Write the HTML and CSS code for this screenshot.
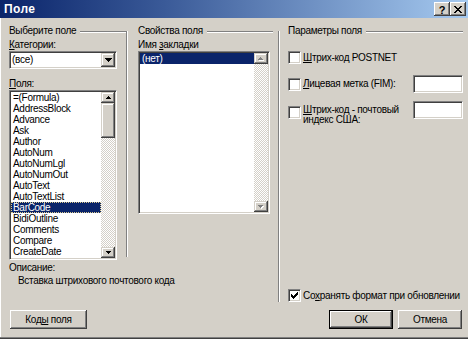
FILE: index.html
```html
<!DOCTYPE html>
<html lang="ru">
<head>
<meta charset="utf-8">
<title>Поле</title>
<link rel="stylesheet" href="styles.css">
</head>
<body>
<div class="window">
  <div class="titlebar">
    <span class="title">Поле</span>
    <div class="tb-buttons">
      <span class="tb-btn tb-help">?</span>
      <span class="tb-btn tb-close"><svg width="8" height="7" viewBox="0 0 8 7" shape-rendering="crispEdges"><path d="M0 0h2v1h-2z M6 0h2v1h-2z M1 1h2v1h-2z M5 1h2v1h-2z M2 2h4v1h-4z M3 3h2v1h-2z M2 4h4v1h-4z M1 5h2v1h-2z M5 5h2v1h-2z M0 6h2v1h-2z M6 6h2v1h-2z" fill="#000"/></svg></span>
    </div>
  </div>
  <div class="content">
    <div class="panes">
      <section class="pane pane-left">
        <div class="group"><span>Выберите поле</span><i class="etch"></i></div>
        <div class="label"><u>К</u>атегории:</div>
        <div class="combo">
          <span class="combo-value">(все)</span>
          <span class="sbtn combo-btn"><svg width="7" height="4" viewBox="0 0 7 4" shape-rendering="crispEdges"><path d="M0 0h7v1h-7z M1 1h5v1h-5z M2 2h3v1h-3z M3 3h1v1h-1z" fill="#000"/></svg></span>
        </div>
        <div class="label label-gap"><u>П</u>оля:</div>
        <div class="listbox list-fields">
          <ul class="items">
            <li>=(Formula)</li>
            <li>AddressBlock</li>
            <li>Advance</li>
            <li>Ask</li>
            <li>Author</li>
            <li>AutoNum</li>
            <li>AutoNumLgl</li>
            <li>AutoNumOut</li>
            <li>AutoText</li>
            <li>AutoTextList</li>
            <li class="selected focused">BarCode</li>
            <li>BidiOutline</li>
            <li>Comments</li>
            <li>Compare</li>
            <li>CreateDate</li>
          </ul>
          <div class="vscroll">
            <span class="sbtn sbtn-arrow"><svg width="5" height="3" viewBox="0 0 5 3" shape-rendering="crispEdges"><path d="M2 0h1v1h-1z M1 1h3v1h-3z M0 2h5v1h-5z" fill="#000"/></svg></span>
            <span class="sbtn thumb"></span>
            <span class="track"></span>
            <span class="sbtn sbtn-arrow"><svg width="5" height="3" viewBox="0 0 5 3" shape-rendering="crispEdges"><path d="M0 0h5v1h-5z M1 1h3v1h-3z M2 2h1v1h-1z" fill="#000"/></svg></span>
          </div>
        </div>
      </section>

      <div class="divider divider-left"></div>

      <section class="pane pane-mid">
        <div class="group"><span>Свойства поля</span><i class="etch"></i></div>
        <div class="label">Имя <u>з</u>акладки</div>
        <div class="listbox list-bookmarks">
          <ul class="items">
            <li class="selected">(нет)</li>
          </ul>
          <div class="vscroll">
            <span class="sbtn sbtn-arrow"><svg width="6" height="4" viewBox="0 0 6 4" shape-rendering="crispEdges"><path d="M3 1h1v1h-1z M2 2h3v1h-3z M1 3h5v1h-5z" fill="#fff"/><path d="M2 0h1v1h-1z M1 1h3v1h-3z M0 2h5v1h-5z" fill="#808080"/></svg></span>
            <span class="track"></span>
            <span class="sbtn sbtn-arrow"><svg width="6" height="4" viewBox="0 0 6 4" shape-rendering="crispEdges"><path d="M1 1h5v1h-5z M2 2h3v1h-3z M3 3h1v1h-1z" fill="#fff"/><path d="M0 0h5v1h-5z M1 1h3v1h-3z M2 2h1v1h-1z" fill="#808080"/></svg></span>
          </div>
        </div>
      </section>

      <div class="divider divider-right"></div>

      <section class="pane pane-right">
        <div class="group"><span>Параметры поля</span><i class="etch"></i></div>
        <div class="option option-1">
          <span class="check"></span>
          <span class="opt-label"><u>Ш</u>трих-код POSTNET</span>
        </div>
        <div class="option option-2">
          <span class="check"></span>
          <span class="opt-label"><u>Л</u>ицевая метка (FIM):</span>
          <span class="textbox"></span>
        </div>
        <div class="option option-3">
          <span class="check"></span>
          <span class="opt-label"><u>Ш</u>трих-код - почтовый<br>индекс США:</span>
          <span class="textbox"></span>
        </div>
        <div class="option option-keep">
          <span class="check checked"><svg width="7" height="7" viewBox="0 0 7 7" shape-rendering="crispEdges"><path d="M6 0h1v3h-1z M5 1h1v3h-1z M4 2h1v3h-1z M3 3h1v3h-1z M2 4h1v3h-1z M1 3h1v3h-1z M0 2h1v3h-1z" fill="#000"/></svg></span>
          <span class="opt-label">Со<u>х</u>ранять формат при обновлении</span>
        </div>
      </section>

      <div class="desc">
        <div class="desc-title">Описание:</div>
        <div class="desc-text">Вставка штрихового почтового кода</div>
      </div>
    </div>

    <div class="actions">
      <button class="btn btn-codes">Код<u>ы</u> поля</button>
      <div class="actions-right">
        <button class="btn btn-default">ОК</button>
        <button class="btn">Отмена</button>
      </div>
    </div>
  </div>
</div>
</body>
</html>
```

FILE: styles.css
```css
* { box-sizing: border-box; }

html, body {
  margin: 0;
  padding: 0;
}

body {
  width: 468px;
  height: 339px;
  overflow: hidden;
  background: #d4d0c8;
  font-family: "Liberation Sans", Arial, sans-serif;
  font-size: 10px;
  letter-spacing: -0.3px;
  color: #000;
}

u { text-decoration: underline; text-underline-offset: 1px; }

.window {
  width: 468px;
  height: 339px;
  display: flex;
  flex-direction: column;
  box-shadow: inset 0 -1px #404040, inset 0 -2px #808080, inset 1px 0 #fff;
}

/* title bar */
.titlebar {
  height: 18px;
  display: flex;
  align-items: center;
  padding: 0 2px 0 4px;
  background: linear-gradient(to right, #0a246a 0%, #3a5a98 35%, #a6caf0 100%);
}

.title {
  color: #fff;
  font-weight: bold;
  font-size: 12px;
  letter-spacing: 0.4px;
}

.tb-buttons {
  margin-left: auto;
  display: flex;
}

.tb-btn {
  width: 16px;
  height: 14px;
  display: flex;
  align-items: center;
  justify-content: center;
  background: #d4d0c8;
  box-shadow: inset -1px -1px #404040, inset 1px 1px #fff, inset -2px -2px #808080;
}

.tb-help {
  font-weight: bold;
  font-size: 11px;
  letter-spacing: 0;
  line-height: 14px;
  padding-top: 1px;
}

/* content */
.content {
  flex: 1;
  padding: 7px 5px 0 9px;
  display: flex;
  flex-direction: column;
}

.panes {
  display: grid;
  grid-template-columns: 117px 2px 150px 2px 183px;
  grid-template-rows: 235px 43px;
}

.pane { display: flex; flex-direction: column; }

.pane-left { grid-column: 1; grid-row: 1; }
.pane-mid { grid-column: 3; grid-row: 1; padding: 0 5px 0 10px; }
.pane-right { grid-column: 5; grid-row: 1 / 3; padding-left: 8px; }

.divider {
  border-left: 1px solid #808080;
  border-right: 1px solid #fff;
  margin-top: 6px;
}
.divider-left { grid-column: 2; grid-row: 1; margin-bottom: 3px; }
.divider-right { grid-column: 4; grid-row: 1 / 3; margin-bottom: 1px; }

.group {
  height: 12px;
  line-height: 12px;
  display: flex;
  align-items: center;
  white-space: nowrap;
}

.etch {
  flex: 1;
  height: 2px;
  margin-left: 4px;
  margin-top: 1px;
  border-top: 1px solid #808080;
  border-bottom: 1px solid #fff;
}

.label {
  height: 12px;
  line-height: 12px;
  margin-top: 2px;
  white-space: nowrap;
}

.label-gap { margin-top: 9px; }

/* sunken controls */
.combo, .listbox, .textbox, .check {
  background: #fff;
  border: 1px solid;
  border-color: #808080 #fff #fff #808080;
  padding: 1px;
  box-shadow: inset 1px 1px #404040, inset -1px -1px #d4d0c8;
}

.combo {
  width: 108px;
  height: 18px;
  display: flex;
  align-items: stretch;
}

.combo-value {
  flex: 1;
  line-height: 14px;
  padding-left: 1px;
}

.sbtn {
  background: #d4d0c8;
  box-shadow: inset -1px -1px #404040, inset 1px 1px #d4d0c8, inset -2px -2px #808080, inset 2px 2px #fff;
  display: flex;
  align-items: center;
  justify-content: center;
}

.combo-btn { width: 14px; }

.listbox {
  display: flex;
}

.list-fields { width: 108px; height: 170px; }
.list-bookmarks { width: 132px; height: 163px; }

.items {
  list-style: none;
  margin: 0;
  padding: 0;
  flex: 1;
  overflow: hidden;
}

.items li {
  height: 11px;
  line-height: 11px;
  padding-left: 2px;
  white-space: nowrap;
}

.items li.selected {
  background: #0a246a;
  color: #fff;
}

.items li.focused {
  outline: 1px dotted #d8c890;
  outline-offset: -1px;
}

.vscroll {
  width: 14px;
  display: flex;
  flex-direction: column;
}

.sbtn-arrow { height: 11px; flex: none; }

.thumb { height: 35px; flex: none; }

.track {
  flex: 1;
  background: repeating-conic-gradient(#d4d0c8 0 25%, #fff 0 50%) 0 0 / 2px 2px;
}

/* right pane */
.option {
  display: flex;
  align-items: center;
}

.check {
  width: 13px;
  height: 13px;
  flex: none;
  display: flex;
  align-items: center;
  justify-content: center;
}

.opt-label {
  margin-left: 2px;
  white-space: nowrap;
  line-height: 12px;
}

.textbox {
  width: 50px;
  height: 18px;
  margin-left: auto;
  flex: none;
}

.option-1 { margin-top: 14px; height: 13px; }
.option-2 { margin-top: 11px; }
.option-3 { margin-top: 8px; align-items: flex-start; }
.option-3 .check { margin-top: 5px; }
.option-3 .opt-label { margin-top: 4px; line-height: 10px; }

.option-keep {
  margin-top: auto;
  margin-bottom: 1px;
  height: 13px;
}

/* description */
.desc {
  grid-column: 1 / 4;
  grid-row: 2;
  padding-top: 2px;
}

.desc-title { height: 12px; line-height: 12px; }
.desc-text { height: 12px; line-height: 12px; margin-top: 1px; padding-left: 9px; }

/* buttons */
.actions {
  margin: 7px 1px 0 1px;
  display: flex;
  align-items: center;
}

.actions-right {
  margin-left: auto;
  display: flex;
  gap: 5px;
}

.btn {
  appearance: none;
  -webkit-appearance: none;
  height: 19px;
  width: 64px;
  padding: 0;
  margin: 0;
  border: 0;
  font: inherit;
  letter-spacing: inherit;
  color: #000;
  background: #d4d0c8;
  box-shadow: inset -1px -1px #404040, inset 1px 1px #fff, inset -2px -2px #808080, inset 2px 2px #d4d0c8;
}

.btn-codes { width: 77px; }

.btn-default {
  border: 1px solid #000;
  box-shadow: inset -1px -1px #404040, inset 1px 1px #fff, inset -2px -2px #808080;
}
```
